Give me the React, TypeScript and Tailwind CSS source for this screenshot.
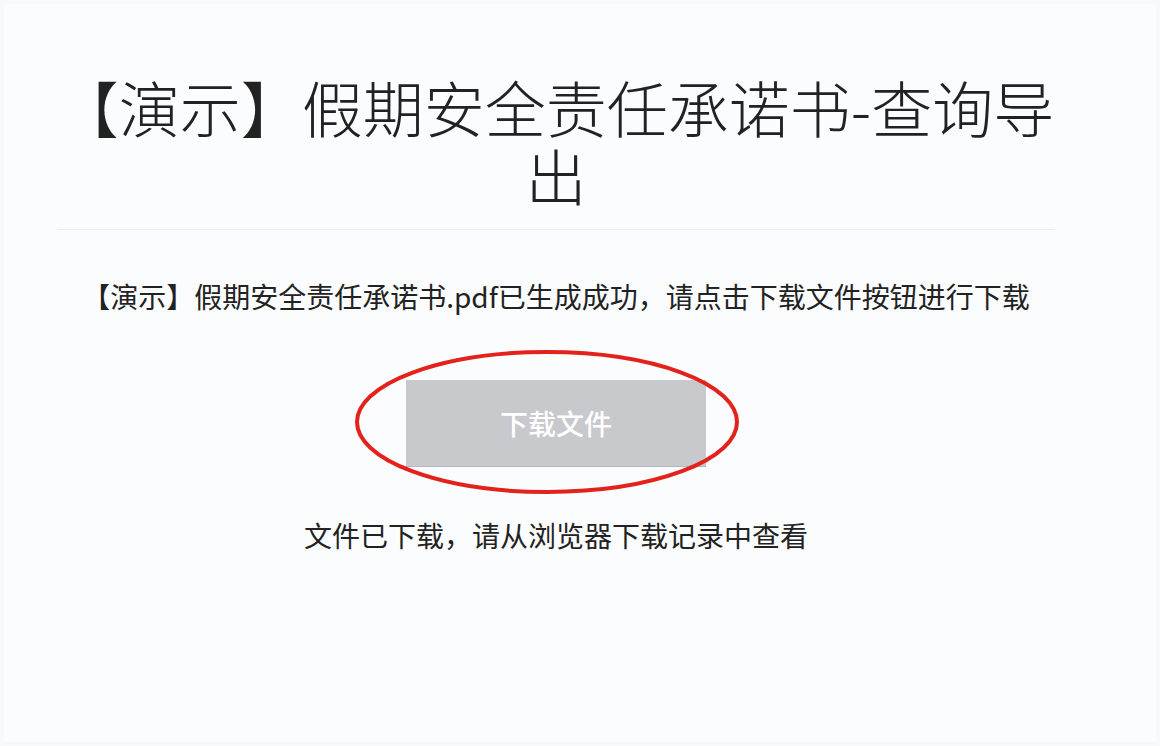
import React from 'react';

const font = { fontFamily: '"Noto Sans CJK SC", "Noto Sans", sans-serif' };

const App = () => {
    return (
        <div className="min-h-[746px] w-full bg-[#f8f9fb] p-[4px]" style={font}>
            <div className="min-h-[738px] bg-[#fbfcfe] pl-[13px] pr-[61px]">
                <div className="mx-auto w-[1078px] px-[40px] pt-[69px]">
                    {/* Title */}
                    <h1 className="text-center text-[61px] leading-[68px] font-light text-[#222]">
                        【演示】假期安全责任承诺书-查询导出
                    </h1>
                    <div className="mt-[20px] h-px bg-[#e9ecf1]"></div>

                    {/* Message */}
                    <p className="mt-[47px] text-center text-[28px] leading-[38px] text-[#222]">
                        【演示】假期安全责任承诺书.pdf已生成成功，请点击下载文件按钮进行下载
                    </p>

                    {/* Download button */}
                    <div className="relative mt-[65px] flex justify-center">
                        <button
                            type="button"
                            className="h-[87px] w-[300px] bg-[#c8c9cc] text-[28px] font-medium text-white border-b border-[#b9b6c4]"
                        >
                            下载文件
                        </button>
                        <svg
                            className="pointer-events-none absolute left-1/2 top-[-32px] -translate-x-[205px]"
                            width="392"
                            height="150"
                            viewBox="0 0 392 150"
                            aria-hidden="true"
                        >
                            <ellipse cx="196" cy="74" rx="190" ry="70" fill="none" stroke="#e3221c" strokeWidth="4" />
                        </svg>
                    </div>

                    <p className="mt-[49px] text-center text-[28px] leading-[38px] text-[#222]">
                        文件已下载，请从浏览器下载记录中查看
                    </p>
                </div>
            </div>
        </div>
    );
};

export default App;
